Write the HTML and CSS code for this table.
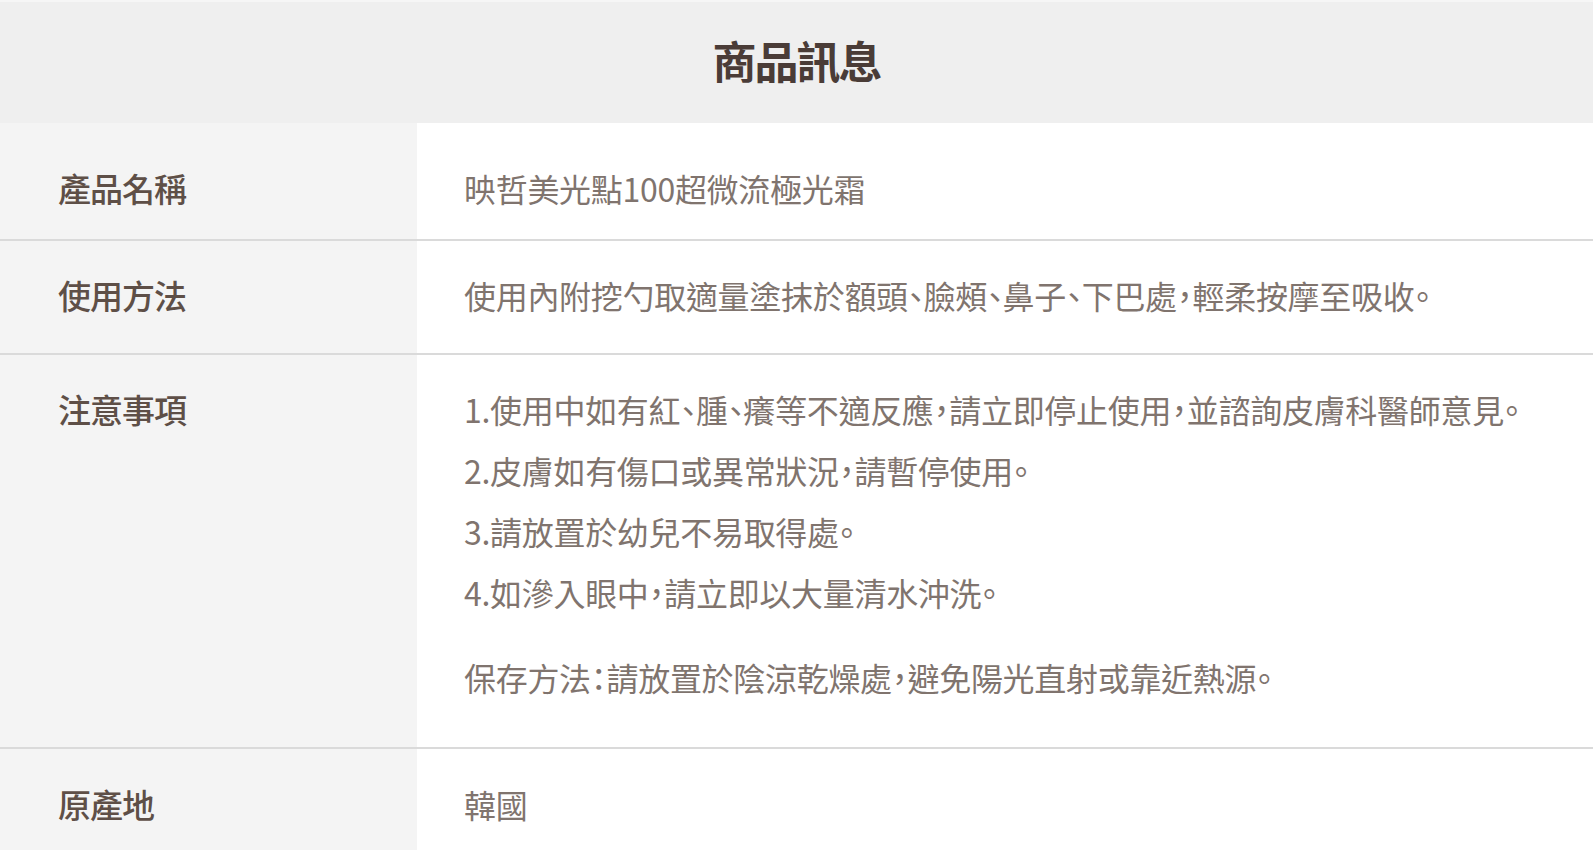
FILE: index.html
```html
<!doctype html>
<html lang="zh-Hant">
  <head>
    <meta charset="UTF-8" />
    <meta name="viewport" content="width=device-width, initial-scale=1.0" />
    <title>商品訊息</title>
    <link rel="stylesheet" href="styles.css">
  </head>
  <body>
    <div class="info">
      <h1 class="info-title">商品訊息</h1>

      <div class="row row-first">
        <div class="label">產品名稱</div>
        <div class="value">映哲美光點100超微流極光霜</div>
      </div>

      <div class="row">
        <div class="label">使用方法</div>
        <div class="value">使用內附挖勺取適量塗抹於額頭、臉頰、鼻子、下巴處，輕柔按摩至吸收。</div>
      </div>

      <div class="row row-notes">
        <div class="label">注意事項</div>
        <div class="value">
          <p>1.使用中如有紅、腫、癢等不適反應，請立即停止使用，並諮詢皮膚科醫師意見。</p>
          <p>2.皮膚如有傷口或異常狀況，請暫停使用。</p>
          <p>3.請放置於幼兒不易取得處。</p>
          <p>4.如滲入眼中，請立即以大量清水沖洗。</p>
          <p class="storage">保存方法：請放置於陰涼乾燥處，避免陽光直射或靠近熱源。</p>
        </div>
      </div>

      <div class="row row-last">
        <div class="label">原產地</div>
        <div class="value">韓國</div>
      </div>
    </div>
  </body>
</html>
```

FILE: styles.css
```css
body {
  margin: 0;
  background: #ffffff;
  font-family: "Noto Sans CJK TC", "Noto Sans", sans-serif;
  font-feature-settings: "palt";
}
.info {
  width: 100%;
  overflow: hidden;
}
.info-title {
  margin: 0;
  height: 123px;
  line-height: 117px;
  background: #efefef;
  border-top: 2px solid #f6f6f6;
  box-sizing: border-box;
  text-align: center;
  font-size: 44px;
  font-weight: 700;
  letter-spacing: -2px;
  color: #4a3c37;
}
.row {
  display: flex;
  border-bottom: 2px solid #dadada;
}
.label {
  width: 417px;
  flex-shrink: 0;
  box-sizing: border-box;
  padding: 24px 0 28px 58px;
  background: #f4f4f4;
  font-size: 33px;
  font-weight: 500;
  line-height: 60px;
  letter-spacing: -1px;
  color: #5e4f47;
}
.value {
  flex: 1;
  padding: 24px 0 28px 47px;
  font-size: 32px;
  line-height: 60px;
  letter-spacing: -0.3px;
  color: #80746e;
}
.row-first .label,
.row-first .value {
  padding-top: 35px;
  padding-bottom: 21px;
}
.value p {
  margin: 0;
  line-height: 61px;
}
.value .storage {
  margin-top: 24px;
}
.row-notes .value {
  padding-bottom: 39px;
}
.row-last {
  border-bottom: none;
}
.row-last .label,
.row-last .value {
  padding-top: 25px;
  padding-bottom: 16px;
}
```
